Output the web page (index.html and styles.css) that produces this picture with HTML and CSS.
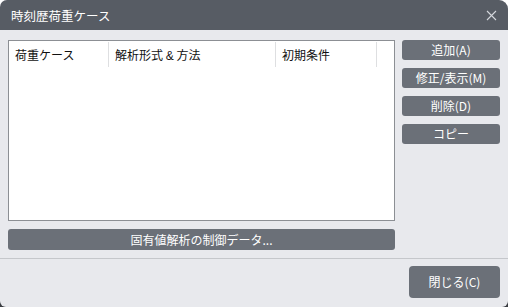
FILE: index.html
```html
<!DOCTYPE html>
<html lang="ja">
<head>
<meta charset="utf-8">
<link rel="stylesheet" href="styles.css">
</head>
<body>
<div class="window">
  <div class="titlebar">
    <span class="title">時刻歴荷重ケース</span>
    <svg class="close-x" width="11" height="11" viewBox="0 0 11 11"><path d="M1 1L10 10M10 1L1 10" stroke="#d4d7dc" stroke-width="1.1" fill="none"/></svg>
  </div>
  <div class="content">
    <div class="left">
      <div class="list">
        <div class="list-head">
          <div class="col c1">荷重ケース</div>
          <div class="col c2">解析形式 <span class="amp">&amp;</span> 方法</div>
          <div class="col c3">初期条件</div>
        </div>
      </div>
      <button class="btn wide">固有値解析の制御データ...</button>
    </div>
    <div class="right">
      <button class="btn side">追加(A)</button>
      <button class="btn side">修正/表示(M)</button>
      <button class="btn side">削除(D)</button>
      <button class="btn side">コピー</button>
    </div>
  </div>
  <div class="divider"></div>
  <div class="footer">
    <button class="btn close">閉じる(C)</button>
  </div>
</div>
</body>
</html>
```

FILE: styles.css
```css
html, body {
  margin: 0;
  padding: 0;
}
body {
  width: 508px;
  height: 307px;
  overflow: hidden;
  background: linear-gradient(#ffffff 50%, #3a3d42 50%);
  font-family: "Noto Sans CJK JP", "Noto Sans", sans-serif;
}
.window {
  width: 508px;
  height: 307px;
  background: #e8e9ed;
  border-radius: 7px 9px 6px 6px;
  overflow: hidden;
  display: flex;
  flex-direction: column;
}
.titlebar {
  height: 30px;
  flex: none;
  background: #575c64;
  display: flex;
  align-items: center;
  justify-content: space-between;
  padding: 0 11px 0 11px;
  box-sizing: border-box;
}
.title {
  color: #ffffff;
  font-size: 12.5px;
  line-height: 16px;
  margin-top: 1px;
}
.close-x {
  display: block;
}
.content {
  display: flex;
  gap: 7px;
  padding: 10px 8px 0 8px;
}
.left {
  width: 387px;
  display: flex;
  flex-direction: column;
  gap: 8px;
}
.list {
  height: 181px;
  box-sizing: border-box;
  background: #ffffff;
  border: 1px solid #8c8f94;
}
.list-head {
  display: flex;
  height: 25px;
  margin-top: 1px;
}
.col {
  box-sizing: border-box;
  border-right: 1px solid #dedfe1;
  padding-left: 6px;
  font-size: 12px;
  line-height: 25px;
  color: #111111;
  white-space: nowrap;
}
.amp {
  font-family: "Liberation Sans", sans-serif;
}
.c1 { width: 100px; }
.c2 { width: 167px; }
.c3 { width: 101px; }
.btn {
  border: none;
  margin: 0;
  padding: 0;
  background: #6b7078;
  color: #ffffff;
  font-family: "Noto Sans CJK JP", "Noto Sans", sans-serif;
  font-size: 12px;
  border-radius: 3px;
  cursor: default;
}
.wide {
  height: 21px;
  line-height: 21px;
}
.right {
  width: 98px;
  display: flex;
  flex-direction: column;
  gap: 8px;
}
.side {
  height: 20px;
  line-height: 20px;
}
.divider {
  height: 1px;
  background: #c5c7cb;
  margin-top: 8px;
  flex: none;
}
.footer {
  display: flex;
  justify-content: flex-end;
  padding: 7px 8px 0 0;
}
.close {
  width: 91px;
  height: 32px;
  border-radius: 4px;
  line-height: 32px;
}
```
